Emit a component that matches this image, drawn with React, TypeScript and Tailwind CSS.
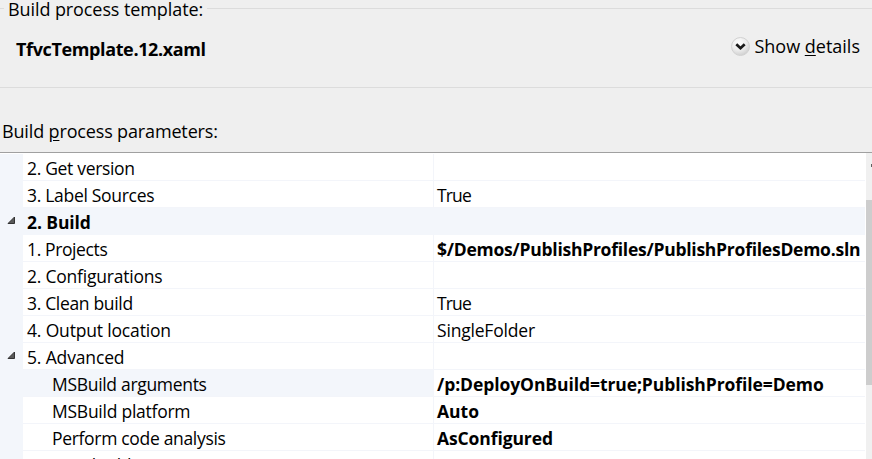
import React from "react";

type Row = {
  label: string;
  value?: string;
  kind?: "category" | "selected";
  bold?: boolean;
  nested?: boolean;
  open?: boolean;
  labelTracking?: string;
  valueTracking?: string;
};

const rows: Row[] = [
  { label: "2. Get version", labelTracking: "tracking-[-0.32px]" },
  { label: "3. Label Sources", labelTracking: "tracking-[-0.3px]", value: "True", valueTracking: "tracking-[-0.85px]" },
  { label: "2. Build", kind: "category", labelTracking: "tracking-[-0.1px]", open: true },
  {
    label: "1. Projects",
    labelTracking: "tracking-[-0.38px]",
    value: "$/Demos/PublishProfiles/PublishProfilesDemo.sln",
    valueTracking: "tracking-[-0.25px]",
    bold: true,
  },
  { label: "2. Configurations", labelTracking: "tracking-[-0.22px]" },
  { label: "3. Clean build", labelTracking: "tracking-[-0.33px]", value: "True", valueTracking: "tracking-[-0.85px]" },
  { label: "4. Output location", labelTracking: "tracking-[-0.17px]", value: "SingleFolder", valueTracking: "tracking-[-0.19px]" },
  { label: "5. Advanced", labelTracking: "tracking-[-0.15px]", open: true },
  {
    label: "MSBuild arguments",
    labelTracking: "tracking-[-0.31px]",
    value: "/p:DeployOnBuild=true;PublishProfile=Demo",
    valueTracking: "tracking-[-0.08px]",
    bold: true,
    nested: true,
    kind: "selected",
  },
  { label: "MSBuild platform", labelTracking: "tracking-[-0.25px]", value: "Auto", bold: true, nested: true },
  {
    label: "Perform code analysis",
    labelTracking: "tracking-[-0.32px]",
    value: "AsConfigured",
    valueTracking: "tracking-[-0.1px]",
    bold: true,
    nested: true,
  },
  { label: "Post-build script arguments", labelTracking: "tracking-[-0.3px]", nested: true },
];

function Expander() {
  return (
    <svg width="9" height="9" viewBox="0 0 9 9" className="mt-[8px] ml-[7px] block">
      <path d="M7.5 1V7.5H1Z" fill="#595959" stroke="#333333" strokeWidth="1" />
    </svg>
  );
}

function GridRow({ row }: { row: Row }) {
  const category = row.kind === "category";
  return (
    <div className="flex h-[27px] shrink-0">
      <div className="w-[23px] shrink-0 bg-[#f3f6fb]">{row.open && <Expander />}</div>
      {category ? (
        <div className="w-[842px] bg-[#f3f6fb] pl-1 font-bold leading-[29px]">
          <span className={row.labelTracking}>{row.label}</span>
        </div>
      ) : (
        <>
          <div
            className={`w-[411px] shrink-0 border-r border-b border-[#f3f5fa] leading-[29px] ${row.nested ? "pl-[29px]" : "pl-1"} ${row.kind === "selected" ? "bg-[#f3f6fb]" : ""}`}
          >
            <span className={row.labelTracking}>{row.label}</span>
          </div>
          <div className={`w-[431px] shrink-0 border-b border-[#f3f5fa] pl-[3px] leading-[29px] ${row.bold ? "font-bold" : ""}`}>
            <span className={row.valueTracking}>{row.value}</span>
          </div>
        </>
      )}
    </div>
  );
}

export default function App() {
  return (
    <div className="flex h-[459px] w-[872px] flex-col overflow-hidden bg-[#efefef] font-['Open_Sans',sans-serif] text-[18px] whitespace-nowrap text-black">
      <div className="flex h-[18px] shrink-0 items-start">
        <div className="mt-[8px] h-px w-1 bg-[#dcdcdc]" />
        <div className="px-1 leading-[19px] tracking-[-0.09px]">Build process template:</div>
        <div className="mt-[8px] h-px grow bg-[#dcdcdc]" />
      </div>
      <div className="flex h-[70px] shrink-0 justify-between border-b border-[#dcdcdc] pr-3 pl-4">
        <div className="pt-[18px] leading-[27px] font-bold tracking-[-0.37px]">TfvcTemplate.12.xaml</div>
        <div className="flex items-start gap-[3px] pt-[15px]">
          <svg width="20" height="20" viewBox="0 0 20 20" className="mt-[3px]">
            <defs>
              <radialGradient id="knob" cx="0.4" cy="0.3" r="0.75">
                <stop offset="0" stopColor="#ffffff" />
                <stop offset="0.55" stopColor="#ececec" />
                <stop offset="1" stopColor="#cccccc" />
              </radialGradient>
            </defs>
            <circle cx="9.5" cy="10.5" r="9" fill="url(#knob)" stroke="#d2d2d2" />
            <path d="M5.3 8.2L9.5 12.2L13.7 8.2" fill="none" stroke="#1a1a1a" strokeWidth="2.7" />
          </svg>
          <div className="leading-[27px]">
            Show <span className="underline underline-offset-2">d</span>etails
          </div>
        </div>
      </div>
      <div className="h-[65px] shrink-0 border-b border-[#a0a0a0] pt-[30px] pl-[2px] leading-[27px] tracking-[-0.15px]">
        Build <span className="underline underline-offset-2">p</span>rocess parameters:
      </div>
      <div className="flex grow overflow-hidden bg-white text-[17.5px]">
        <div className="flex h-[306px] w-[865px] shrink-0 flex-col overflow-hidden pt-px">
          {rows.map((row, i) => (
            <GridRow key={i} row={row} />
          ))}
        </div>
        <div className="ml-px flex h-[306px] w-[6px] flex-col items-end bg-[#f0f0f0]">
          <div className="mt-[11px] h-[3px] w-px bg-[#606060]" />
          <div className="mt-[33px] h-[185px] w-full bg-[#cdcdcd]" />
        </div>
      </div>
    </div>
  );
}
